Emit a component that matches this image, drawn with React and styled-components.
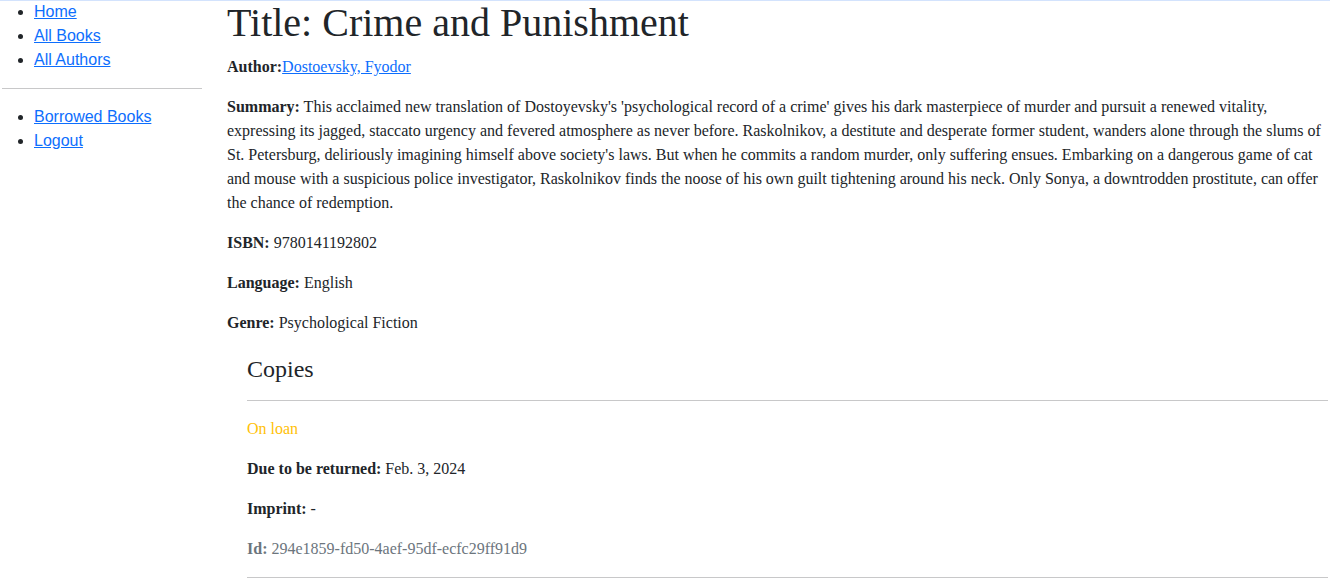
import styled, { createGlobalStyle } from "styled-components";

const GlobalStyle = createGlobalStyle`
  html, body {
    margin: 0;
    padding: 0;
    background: #fff;
  }
  body {
    box-shadow: inset 0 1px 0 #d3e3fd;
    min-height: 580px;
    color: #212529;
    font-family: "Liberation Serif", "Times New Roman", serif;
    font-size: 16px;
    line-height: 1.5;
  }
`;

const sideLinks = [
  { label: "Home", href: "#" },
  { label: "All Books", href: "#" },
  { label: "All Authors", href: "#" },
];

const userLinks = [
  { label: "Borrowed Books", href: "#" },
  { label: "Logout", href: "#" },
];

const book = {
  title: "Crime and Punishment",
  author: "Dostoevsky, Fyodor",
  summary:
    "This acclaimed new translation of Dostoyevsky's 'psychological record of a crime' gives his dark masterpiece of murder and pursuit a renewed vitality, expressing its jagged, staccato urgency and fevered atmosphere as never before. Raskolnikov, a destitute and desperate former student, wanders alone through the slums of St. Petersburg, deliriously imagining himself above society's laws. But when he commits a random murder, only suffering ensues. Embarking on a dangerous game of cat and mouse with a suspicious police investigator, Raskolnikov finds the noose of his own guilt tightening around his neck. Only Sonya, a downtrodden prostitute, can offer the chance of redemption.",
  isbn: "9780141192802",
  language: "English",
  genre: "Psychological Fiction",
  copies: [
    {
      status: "On loan",
      tone: "warning",
      due: "Feb. 3, 2024",
      imprint: "-",
      id: "294e1859-fd50-4aef-95df-ecfc29ff91d9",
    },
  ],
};

const TONES = {
  warning: "#ffc107",
  success: "#198754",
  danger: "#dc3545",
};

const App = () => {
  return (
    <>
      <GlobalStyle />
      <Layout>
        <Sidebar>
          <NavList>
            {sideLinks.map((link) => (
              <li key={link.label}>
                <NavLink href={link.href}>{link.label}</NavLink>
              </li>
            ))}
          </NavList>
          <Rule />
          <NavList>
            {userLinks.map((link) => (
              <li key={link.label}>
                <NavLink href={link.href}>{link.label}</NavLink>
              </li>
            ))}
          </NavList>
        </Sidebar>

        <Main>
          <Title>Title: {book.title}</Title>
          <Para>
            <strong>Author:</strong>
            <TextLink href="#">{book.author}</TextLink>
          </Para>
          <Para>
            <strong>Summary:</strong> {book.summary}
          </Para>
          <Para>
            <strong>ISBN:</strong> {book.isbn}
          </Para>
          <Para>
            <strong>Language:</strong> {book.language}
          </Para>
          <Para>
            <strong>Genre:</strong> {book.genre}
          </Para>

          <Copies>
            <CopiesHeading>Copies</CopiesHeading>
            {book.copies.map((copy) => (
              <div key={copy.id}>
                <Rule />
                <Para $color={TONES[copy.tone]}>{copy.status}</Para>
                <Para>
                  <strong>Due to be returned:</strong> {copy.due}
                </Para>
                <Para>
                  <strong>Imprint:</strong> {copy.imprint}
                </Para>
                <Para $color="#6c757d">
                  <strong>Id:</strong> {copy.id}
                </Para>
              </div>
            ))}
            <Rule />
          </Copies>
        </Main>
      </Layout>
    </>
  );
};

const Layout = styled.div`
  display: grid;
  grid-template-columns: 200px 1fr;
  column-gap: 25px;
  padding: 0 2px;
  margin-top: -1px;
`;

const Sidebar = styled.nav`
  padding-top: 1px;
  font-family: "Liberation Sans", Arial, sans-serif;
`;

const NavList = styled.ul`
  margin: 0 0 16px;
  padding-left: 32px;
  list-style: disc;
`;

const NavLink = styled.a`
  color: #0d6efd;
  text-decoration: underline;
`;

const Rule = styled.hr`
  margin: 16px 0;
  border: 0;
  border-top: 1px solid #c8c8c9;
`;

const Main = styled.main`
  min-width: 0;
`;

const Title = styled.h1`
  margin: 0 0 8px;
  font-size: 40px;
  font-weight: 500;
  line-height: 1.2;
`;

const Para = styled.p`
  margin: 0 0 16px;
  color: ${(p) => p.$color || "inherit"};
`;

const TextLink = styled.a`
  color: #0d6efd;
  text-decoration: underline;
`;

const Copies = styled.section`
  margin: 20px 0 0 20px;
`;

const CopiesHeading = styled.h4`
  margin: 0 0 8px;
  font-size: 24px;
  font-weight: 500;
  line-height: 1.2;
`;

export default App;
